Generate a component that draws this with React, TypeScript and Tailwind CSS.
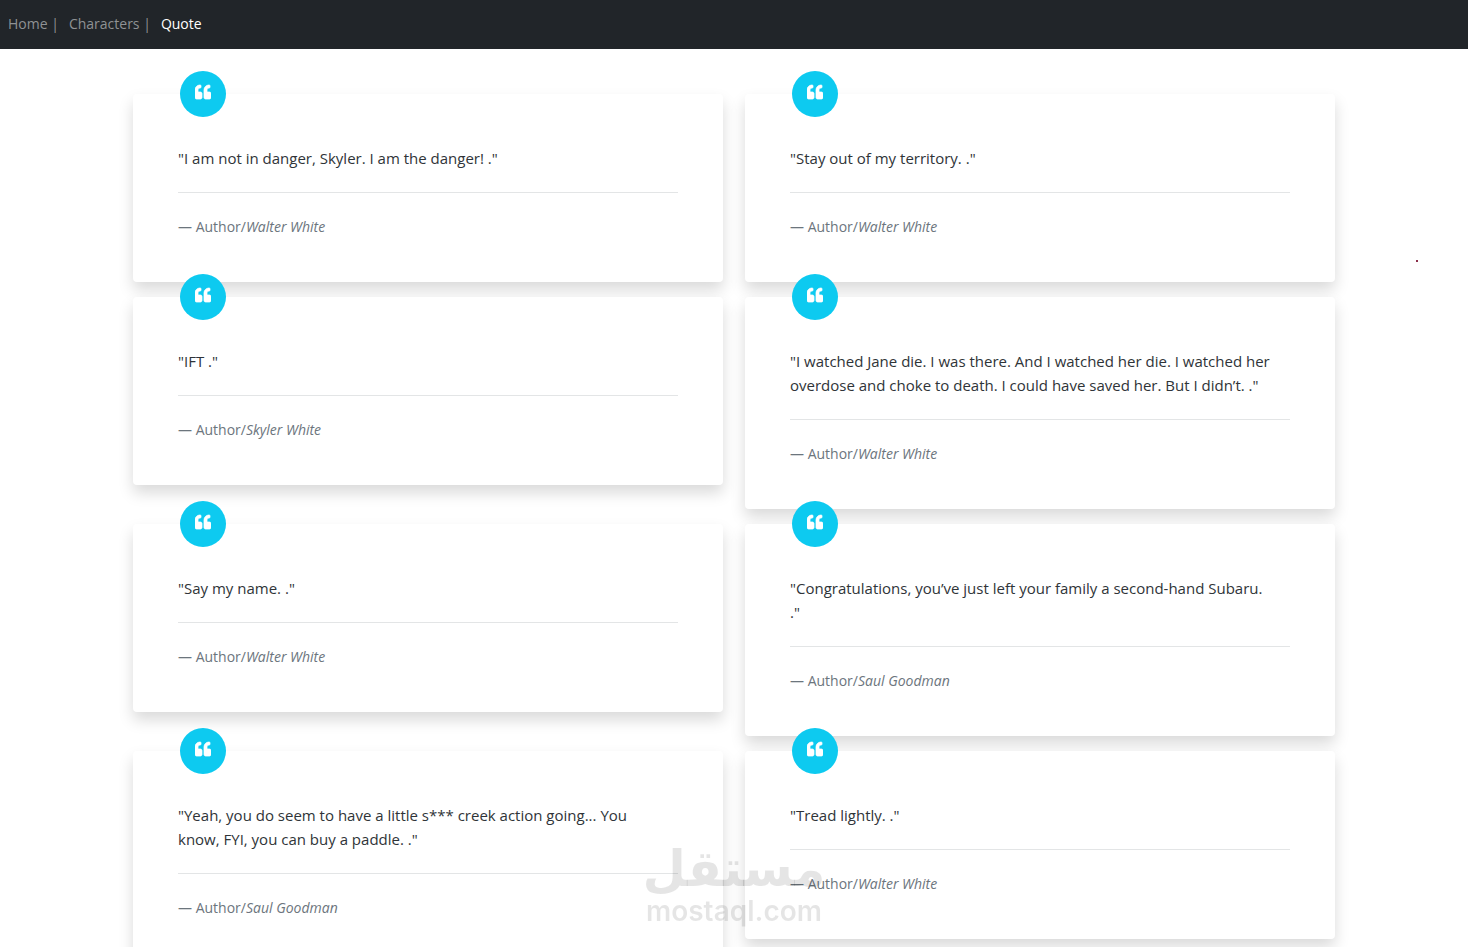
import React from 'react';
import { FaQuoteLeft } from 'react-icons/fa';

interface Quote {
  id: number;
  text: string;
  author: string;
}

const quotes: Quote[] = [
  { id: 1, text: 'I am not in danger, Skyler. I am the danger! .', author: 'Walter White' },
  { id: 2, text: 'Stay out of my territory. .', author: 'Walter White' },
  { id: 3, text: 'IFT .', author: 'Skyler White' },
  {
    id: 4,
    text: 'I watched Jane die. I was there. And I watched her die. I watched her\noverdose and choke to death. I could have saved her. But I didn’t. .',
    author: 'Walter White',
  },
  { id: 5, text: 'Say my name. .', author: 'Walter White' },
  {
    id: 6,
    text: 'Congratulations, you’ve just left your family a second-hand Subaru.\n.',
    author: 'Saul Goodman',
  },
  {
    id: 7,
    text: 'Yeah, you do seem to have a little s*** creek action going... You\nknow, FYI, you can buy a paddle. .',
    author: 'Saul Goodman',
  },
  { id: 8, text: 'Tread lightly. .', author: 'Walter White' },
];

const Navbar: React.FC = () => (
  <nav className="flex h-[49px] items-center gap-[10px] bg-[#212529] px-2 pb-[2px] text-[14px] text-[#8f9294]">
    <a href="#home" className="hover:text-white">Home |</a>
    <a href="#characters" className="hover:text-white">Characters |</a>
    <a href="#quote" className="text-white">Quote</a>
  </nav>
);

const QuoteCard: React.FC<{ quote: Quote }> = ({ quote }) => (
  <blockquote className="relative self-start rounded bg-white px-[45px] pt-[52px] pb-[43px] shadow-[0_8px_15px_rgba(0,0,0,0.15)]">
    <div className="absolute -top-[23px] left-[47px] flex size-[46px] items-center justify-center rounded-full bg-[#0dcaf0] pb-1 text-white">
      <FaQuoteLeft size={16} stroke="currentColor" strokeWidth={24} />
    </div>
    <p className="text-[15px] leading-6 whitespace-pre-line text-[#2f3438]">"{quote.text}"</p>
    <hr className="my-[22px] border-[#e3e5e6]" />
    <footer className="text-[14px] leading-6 text-[#6c757d]">
      — Author/<cite>{quote.author}</cite>
    </footer>
  </blockquote>
);

const Watermark: React.FC = () => (
  <div className="pointer-events-none fixed inset-x-0 bottom-5 flex flex-col items-center text-black/10">
    <span lang="ar" dir="rtl" className="font-['DejaVu_Sans',sans-serif] text-[50px] leading-[52px] font-bold">
      مستقل
    </span>
    <span className="font-['Inter',sans-serif] text-[28px] leading-8 font-semibold">mostaql.com</span>
  </div>
);

const App: React.FC = () => {
  return (
    <div className="relative min-h-screen bg-white font-['Open_Sans',sans-serif]">
      <Navbar />
      <main className="mx-auto grid max-w-[1202px] grid-cols-2 gap-x-[22px] gap-y-[15px] pt-[45px] pb-4">
        {quotes.map((quote) => (
          <QuoteCard key={quote.id} quote={quote} />
        ))}
      </main>
      <span className="absolute top-[260px] right-[50px] size-[2px] bg-[#8b2e4a]" />
      <Watermark />
    </div>
  );
};

export default App;
